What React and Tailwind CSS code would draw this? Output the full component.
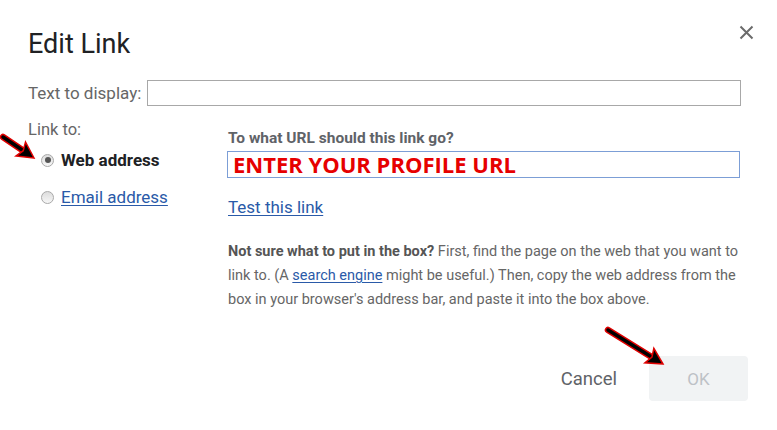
import React from "react";

function Radio({ checked }) {
  return (
    <span className="relative inline-flex h-[13px] w-[13px] shrink-0 items-center justify-center rounded-full border border-[#a9a9a9] bg-gradient-to-b from-[#dcdcdc] to-[#f7f7f7]">
      {checked && <span className="h-[6px] w-[6px] rounded-full bg-[#555]" />}
    </span>
  );
}

function Arrow({ x1, y1, x2, y2 }) {
  const ang = Math.atan2(y2 - y1, x2 - x1);
  const L = 16;
  const W = 8.5;
  const bx = x2 - L * Math.cos(ang);
  const by = y2 - L * Math.sin(ang);
  const px = -Math.sin(ang);
  const py = Math.cos(ang);
  const pts = `${x2},${y2} ${bx + W * px},${by + W * py} ${bx + 3 * Math.cos(ang)},${by + 3 * Math.sin(ang)} ${bx - W * px},${by - W * py}`;
  const sx = bx + 4 * Math.cos(ang);
  const sy = by + 4 * Math.sin(ang);
  return (
    <g>
      <line x1={x1} y1={y1} x2={sx} y2={sy} stroke="#e00000" strokeWidth="6.5" strokeLinecap="round" />
      <line x1={x1} y1={y1} x2={sx} y2={sy} stroke="#000" strokeWidth="3.5" strokeLinecap="round" />
      <polygon points={pts} fill="#000" stroke="#e00000" strokeWidth="1.5" strokeLinejoin="miter" />
    </g>
  );
}

export default function App() {
  return (
    <div className="relative h-[430px] w-[777px] overflow-hidden bg-white font-['Roboto',sans-serif]">
      <div className="flex flex-col pl-[28px] pr-[36px]">
        <div className="flex items-start justify-between pt-[28px]">
          <h1 className="text-[27px] leading-[32px] text-[#202124]">Edit Link</h1>
          <button className="-mr-[13px] mt-[-4px] flex h-[16px] w-[16px] items-center justify-center text-[#666]">
            <svg width="15" height="15" viewBox="0 0 15 15">
              <path d="M1.5 1.5 L13.5 13.5 M13.5 1.5 L1.5 13.5" stroke="#6b6b6b" strokeWidth="2" fill="none" />
            </svg>
          </button>
        </div>

        <div className="mt-[20px] flex items-center gap-[6px]">
          <span className="text-[17px] leading-[20px] text-[#666]">Text to display:</span>
          <div className="h-[26px] flex-1 border border-[#a8a8a8]" />
        </div>

        <div className="mt-[14px] flex">
          <div className="flex w-[200px] shrink-0 flex-col">
            <span className="text-[16.5px] leading-[20px] text-[#666]">Link to:</span>
            <div className="ml-[13px] mt-[10px] flex h-[20px] items-center gap-[7px]">
              <Radio checked />
              <span className="text-[17px] font-bold leading-[20px] text-[#202124]">Web address</span>
            </div>
            <div className="ml-[13px] mt-[17px] flex h-[20px] items-center gap-[7px]">
              <Radio />
              <span className="text-[17px] leading-[20px] text-[#2a5aa8] underline underline-offset-2">Email address</span>
            </div>
          </div>

          <div className="flex flex-1 flex-col pt-[9px]">
            <span className="text-[15.5px] font-bold leading-[18px] text-[#5f6368]">To what URL should this link go?</span>
            <div className="mt-[4px] flex h-[27px] w-[513px] -ml-[1px] items-center border border-[#7c9ed6] pl-[5px]">
              <span className="font-['Open_Sans',sans-serif] text-[22px] font-bold leading-[25px] text-[#e60000]">ENTER YOUR PROFILE URL</span>
            </div>
            <span className="mt-[19px] text-[17px] leading-[20px] text-[#2a5aa8] underline underline-offset-2">Test this link</span>
            <p className="mt-[23px] w-[515px] text-[14.5px] leading-[24px] text-[#666]">
              <b className="text-[#555]">Not sure what to put in the box?</b> First, find the page on the web that you want to link to. (A <span className="text-[#2a5aa8] underline underline-offset-2">search engine</span> might be useful.) Then, copy the web address from the box in your browser's address bar, and paste it into the box above.
            </p>
          </div>
        </div>

        <div className="mr-[-7px] mt-[44px] flex items-center justify-end gap-[32px]">
          <span className="text-[18.5px] leading-[22px] text-[#5f6368]">Cancel</span>
          <div className="flex h-[45px] w-[99px] items-center justify-center rounded-[4px] bg-[#f1f3f4]">
            <span className="text-[17px] leading-[22px] text-[#bdc1c6]">OK</span>
          </div>
        </div>
      </div>

      <svg className="pointer-events-none absolute left-0 top-0" width="777" height="430">
        <Arrow x1={3} y1={137} x2={34} y2={158} />
        <Arrow x1={608} y1={330} x2={663} y2={364} />
      </svg>
    </div>
  );
}
